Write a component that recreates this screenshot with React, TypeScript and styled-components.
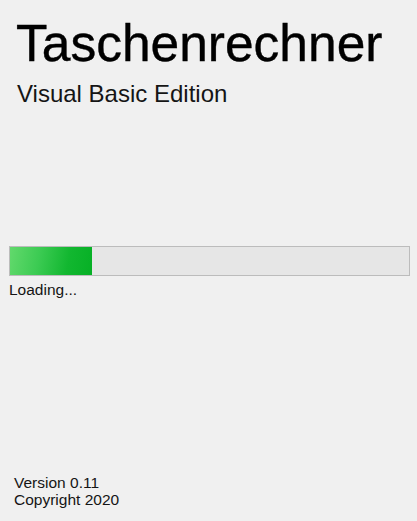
import React from "react";
import styled, { createGlobalStyle } from "styled-components";

const GlobalStyle = createGlobalStyle`
  html, body {
    margin: 0;
    padding: 0;
    background: #f0f0f0;
  }
  body {
    font-family: "Liberation Sans", Arial, sans-serif;
    color: #000;
  }
`;

const Splash = styled.div`
  box-sizing: border-box;
  height: 521px;
  width: 417px;
  display: flex;
  flex-direction: column;
  background: #f0f0f0;
  padding: 15px 0 13px 0;
  overflow: hidden;
`;

const Title = styled.h1`
  margin: 0 0 0 16px;
  font-family: "Liberation Sans", Arial, sans-serif;
  font-weight: 400;
  font-size: 51.5px;
  line-height: 56px;
  color: #000;
  white-space: nowrap;
  -webkit-text-stroke: 0.4px #000;
`;

const Subtitle = styled.div`
  margin: 9px 0 0 17px;
  font-size: 24px;
  line-height: 28px;
  color: #151515;
  white-space: nowrap;
`;

const ProgressTrack = styled.div`
  box-sizing: border-box;
  margin: 138px 7px 0 9px;
  height: 30px;
  border: 1px solid #bcbcbc;
  background: #e6e6e6;
  display: flex;
`;

const ProgressFill = styled.div`
  height: 100%;
  background: linear-gradient(100deg, #62d96c 0%, #3ccb53 35%, #12b730 70%, #06b025 100%);
`;

const Status = styled.div`
  margin: 5px 0 0 9px;
  font-size: 15.5px;
  line-height: 18px;
  color: #151515;
`;

const Footer = styled.div`
  margin-top: auto;
  margin-left: 14px;
  display: flex;
  flex-direction: column;
  font-size: 15.5px;
  line-height: 17px;
  color: #151515;
`;

export default function App() {
  const progress = 20.5;
  return (
    <>
      <GlobalStyle />
      <Splash>
        <Title>Taschenrechner</Title>
        <Subtitle>Visual Basic Edition</Subtitle>
        <ProgressTrack>
          <ProgressFill style={{ width: `${progress}%` }} />
        </ProgressTrack>
        <Status>Loading...</Status>
        <Footer>
          <span>Version 0.11</span>
          <span>Copyright 2020</span>
        </Footer>
      </Splash>
    </>
  );
}
